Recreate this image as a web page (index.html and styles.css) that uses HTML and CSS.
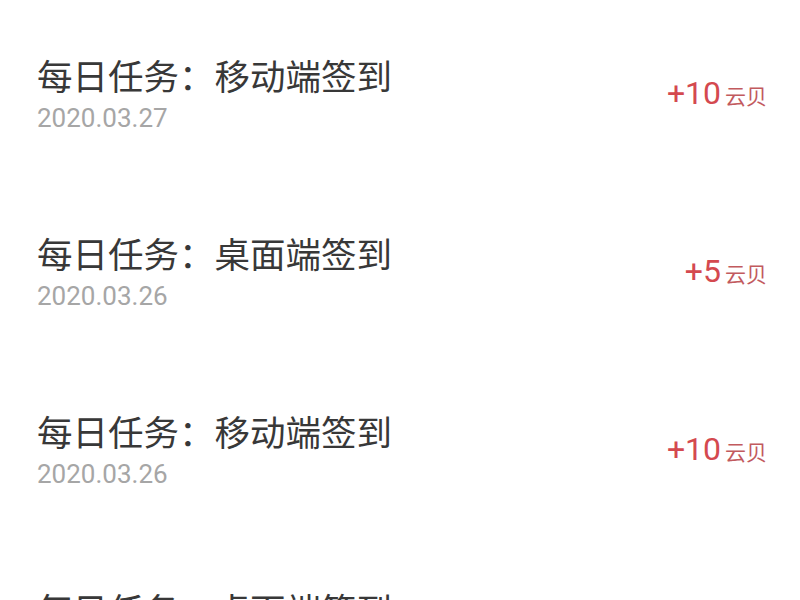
FILE: index.html
```html
<!DOCTYPE html>
<html lang="zh-CN">
<head>
<meta charset="utf-8">
<title>云贝记录</title>
<link rel="stylesheet" href="styles.css">
</head>
<body>
<ul class="list">
  <li class="row">
    <div class="info">
      <div class="title">每日任务：移动端签到</div>
      <div class="date">2020.03.27</div>
    </div>
    <div class="amount"><span class="num">+10</span><span class="unit">云贝</span></div>
  </li>
  <li class="row">
    <div class="info">
      <div class="title">每日任务：桌面端签到</div>
      <div class="date">2020.03.26</div>
    </div>
    <div class="amount"><span class="num">+5</span><span class="unit">云贝</span></div>
  </li>
  <li class="row">
    <div class="info">
      <div class="title">每日任务：移动端签到</div>
      <div class="date">2020.03.26</div>
    </div>
    <div class="amount"><span class="num">+10</span><span class="unit">云贝</span></div>
  </li>
  <li class="row">
    <div class="info">
      <div class="title">每日任务：桌面端签到</div>
      <div class="date">2020.03.25</div>
    </div>
    <div class="amount"><span class="num">+5</span><span class="unit">云贝</span></div>
  </li>
</ul>
</body>
</html>
```

FILE: styles.css
```css
html, body {
  margin: 0;
  padding: 0;
  background: #ffffff;
  overflow: hidden;
}
body {
  font-family: "Noto Sans", "Noto Sans CJK SC", sans-serif;
}
.list {
  list-style: none;
  margin: 0;
  padding: 7px 0 0 0;
}
.row {
  height: 178px;
  display: flex;
  align-items: center;
  justify-content: space-between;
  padding: 0 33px 0 37px;
}
.info {
  display: flex;
  flex-direction: column;
}
.title {
  font-family: "Noto Sans CJK SC", sans-serif;
  font-size: 35.5px;
  line-height: 44px;
  color: #383838;
}
.date {
  font-family: Roboto, "Noto Sans", sans-serif;
  font-size: 26px;
  line-height: 42px;
  color: #a6a6a6;
}
.amount {
  display: flex;
  align-items: baseline;
  gap: 4px;
  margin-top: -6px;
}
.num {
  font-family: Roboto, "Noto Sans", sans-serif;
  font-size: 32px;
  color: #d4494f;
}
.unit {
  font-family: "Noto Sans CJK SC", sans-serif;
  font-size: 21px;
  color: #c25a5e;
}
```
